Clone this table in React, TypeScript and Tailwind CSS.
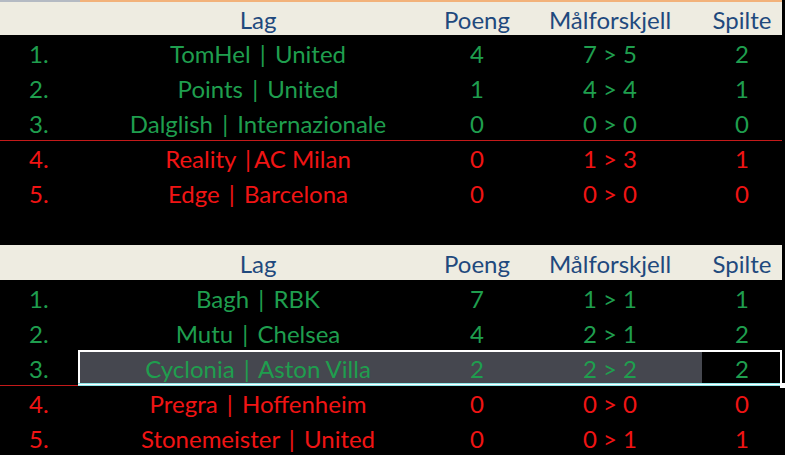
type Row = { pos: string; team: string; pts: string; diff: string; played: string; up: boolean };

const first: Row[] = [
  { pos: "1.", team: "TomHel | United", pts: "4", diff: "7 > 5", played: "2", up: true },
  { pos: "2.", team: "Points | United", pts: "1", diff: "4 > 4", played: "1", up: true },
  { pos: "3.", team: "Dalglish | Internazionale", pts: "0", diff: "0 > 0", played: "0", up: true },
  { pos: "4.", team: "Reality |AC Milan", pts: "0", diff: "1 > 3", played: "1", up: false },
  { pos: "5.", team: "Edge | Barcelona", pts: "0", diff: "0 > 0", played: "0", up: false },
];

const second: Row[] = [
  { pos: "1.", team: "Bagh | RBK", pts: "7", diff: "1 > 1", played: "1", up: true },
  { pos: "2.", team: "Mutu | Chelsea", pts: "4", diff: "2 > 1", played: "2", up: true },
  { pos: "3.", team: "Cyclonia | Aston Villa", pts: "2", diff: "2 > 2", played: "2", up: true },
  { pos: "4.", team: "Pregra | Hoffenheim", pts: "0", diff: "0 > 0", played: "0", up: false },
  { pos: "5.", team: "Stonemeister | United", pts: "0", diff: "0 > 1", played: "1", up: false },
];

const cols = "grid grid-cols-[80px_356px_82px_184px_80px]";

// Calibri's pipe is much wider than Lato's, so pad it a little
function Team({ name }: { name: string }) {
  const [a, b] = name.split("|");
  return (
    <span className="whitespace-pre">
      {a}
      <span className="px-[3px]">|</span>
      {b}
    </span>
  );
}

function Header({ top }: { top?: boolean }) {
  return (
    <div className="relative w-[782px]">
      {top && (
        <div className="flex h-[2px]">
          <div className="w-[80px] bg-[#b4bac3]" />
          <div className="flex-1 bg-[#f2b27a]" />
        </div>
      )}
      <div className={`${cols} ${top ? "h-[33px]" : "h-[35px]"} items-center bg-[#eeece1] text-[#1f497d] pt-[3px]`}>
        <div />
        <div className="text-center">Lag</div>
        <div className="text-center">Poeng</div>
        <div className="text-center">Målforskjell</div>
        <div className="text-center">Spilte</div>
      </div>
    </div>
  );
}

function TableRow({ r, divider, selected }: { r: Row; divider?: boolean; selected?: boolean }) {
  const color = r.up ? "text-[#1f9e4e]" : "text-[#f01414]";
  const fill = selected ? "bg-[#45474f]" : "";
  return (
    <div className={`relative ${cols} h-[35px] items-center w-[782px] ${color}`}>
      <div className="pl-[29px] pt-[3px]">{r.pos}</div>
      <div className={`h-full flex items-center justify-center pt-[3px] ${fill}`}>
        <Team name={r.team} />
      </div>
      <div className={`h-full flex items-center justify-center pt-[3px] ${fill}`}>{r.pts}</div>
      <div className={`h-full flex items-center justify-center pt-[3px] ${fill}`}>{r.diff}</div>
      <div className="text-center pt-[3px]">{r.played}</div>
      {divider && <div className="absolute left-0 right-0 bottom-[-1px] h-px bg-[#c41a1a]" />}
      {selected && (
        <>
          <div className="absolute left-[78px] right-0 top-0 bottom-0 border-2 border-white border-b-0" />
          <div className="absolute left-[78px] right-0 bottom-[-1px] h-[3px] border-y border-[#8ee8ea] bg-white" />
          <div className="absolute right-[-3px] bottom-[-3px] w-[5px] h-[5px] bg-white" />
        </>
      )}
    </div>
  );
}

export default function App() {
  return (
    <div className="w-[785px] h-[455px] overflow-hidden bg-black font-['Lato','Liberation_Sans',sans-serif] text-[24px] leading-none">
      <Header top />
      {first.map((r, i) => (
        <TableRow key={r.pos} r={r} divider={i === 2} />
      ))}
      <div className="h-[35px]" />
      <Header />
      {second.map((r, i) => (
        <TableRow key={r.pos} r={r} divider={i === 2} selected={i === 2} />
      ))}
    </div>
  );
}
